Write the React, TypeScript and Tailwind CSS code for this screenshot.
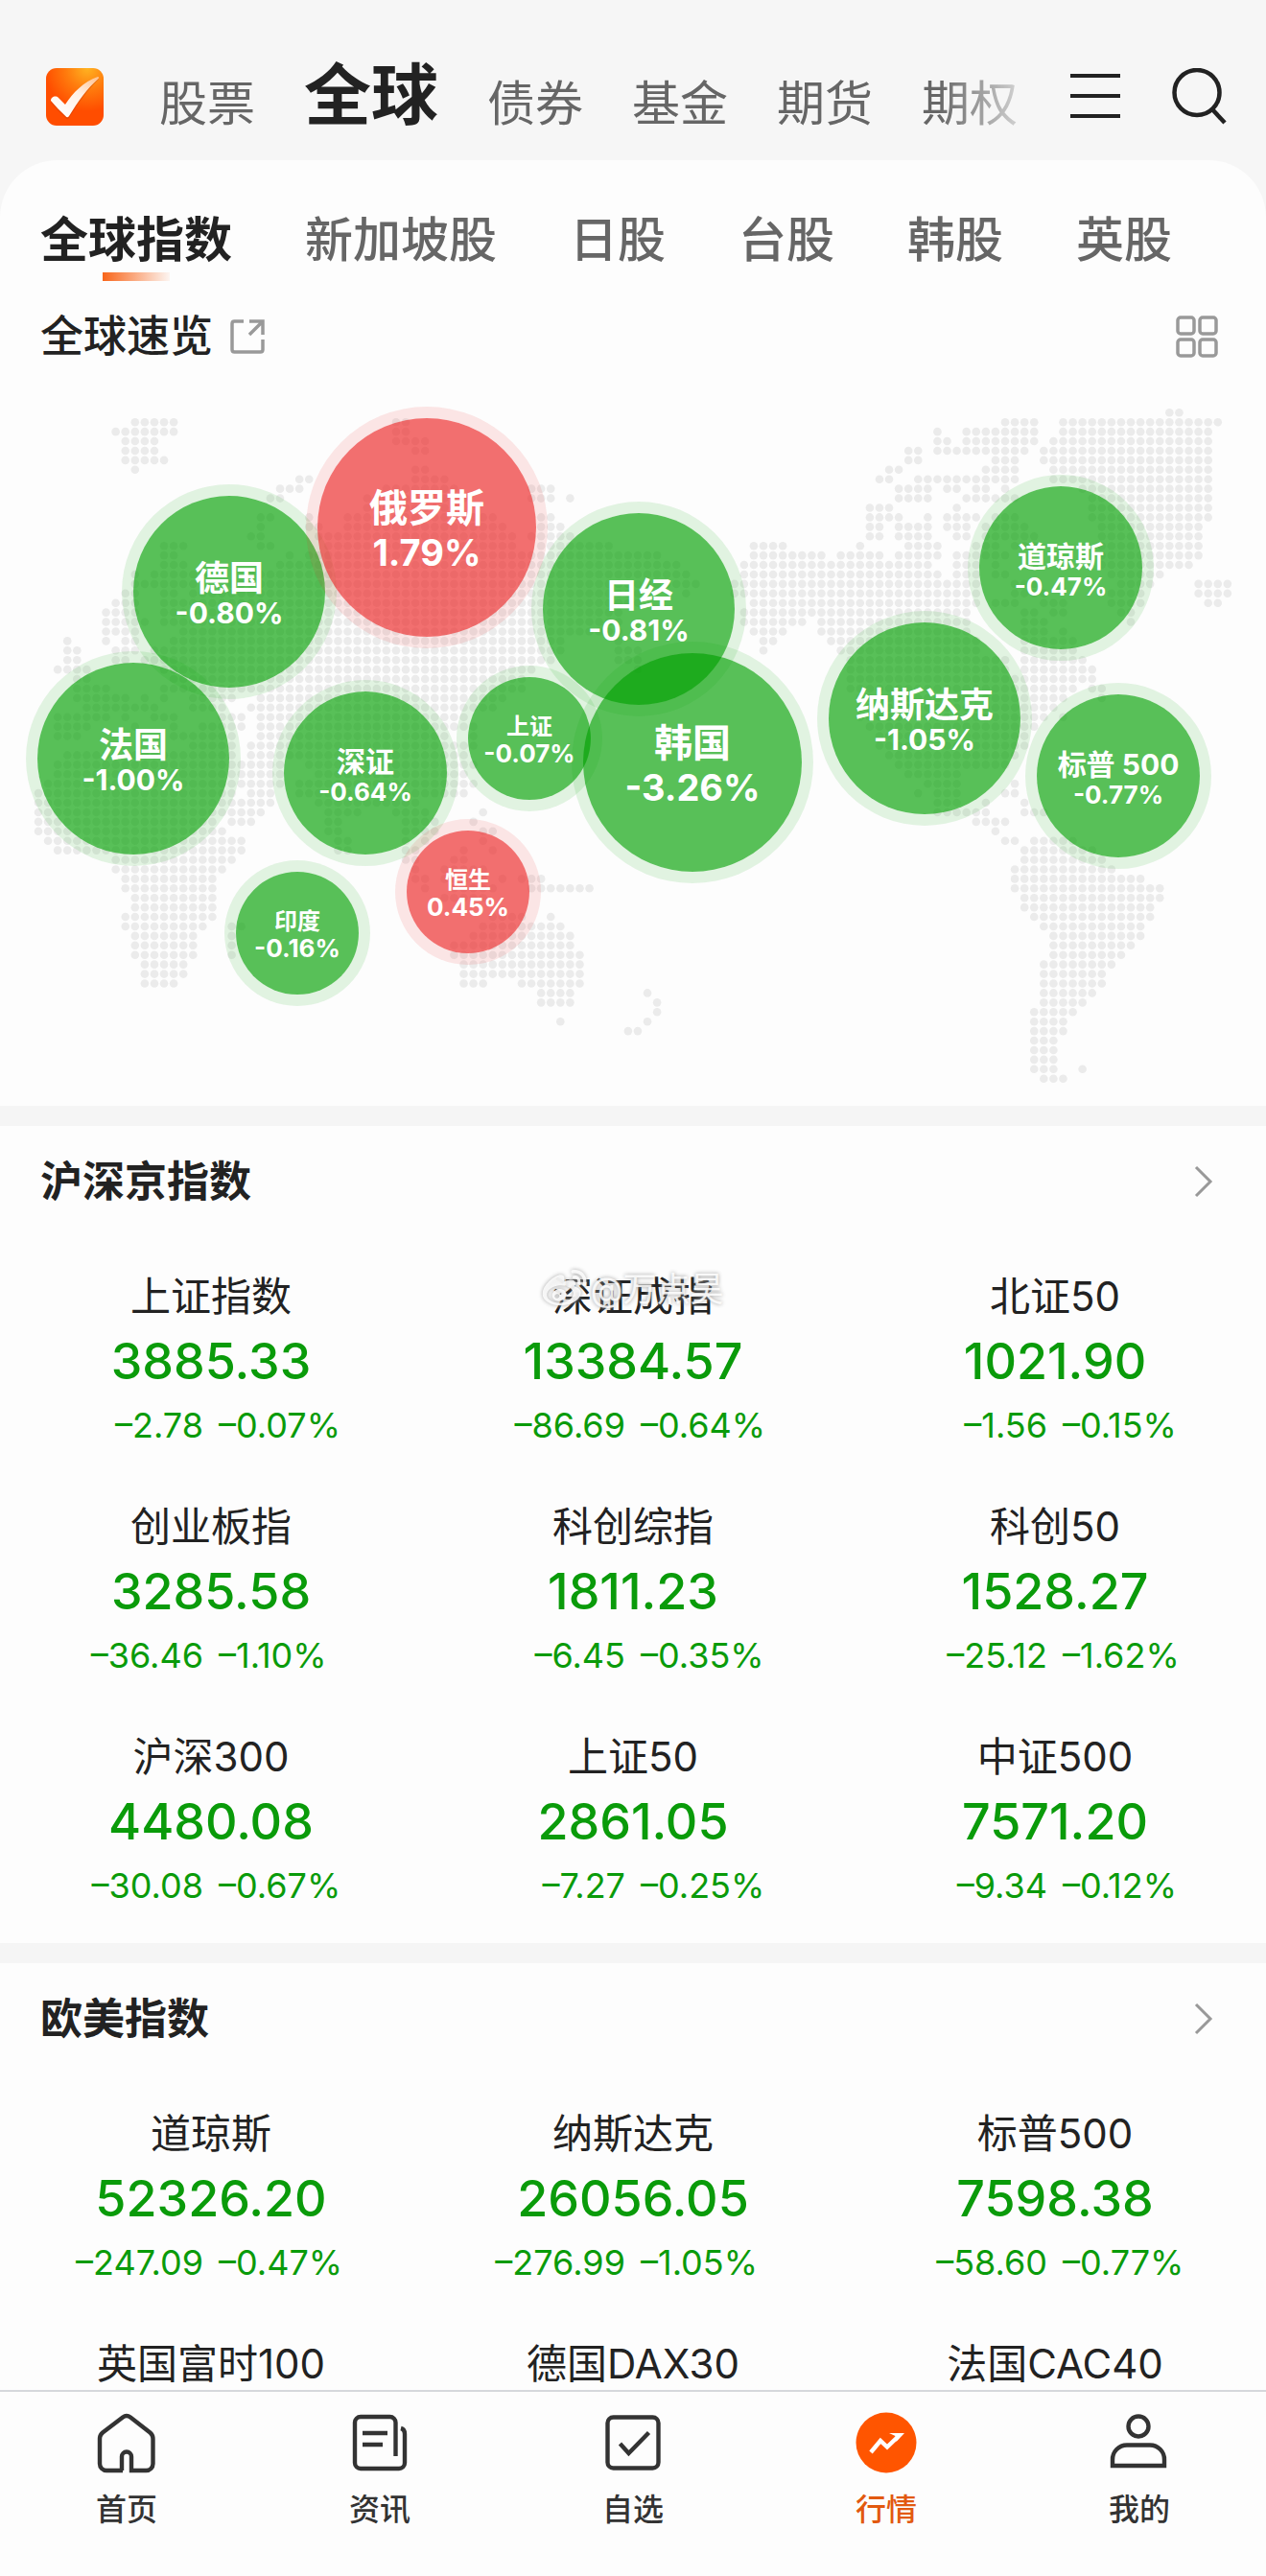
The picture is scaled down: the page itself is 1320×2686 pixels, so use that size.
import React from "react";
import { FaWeibo } from "react-icons/fa";

const CJK = "font-['Inter','Noto_Sans_CJK_SC',sans-serif]";

/* Land dots of the world map: one entry per row, inclusive column spans. */
const MAP_ROWS = [
  "117-118",
  "10-14 37-38 100-103 106-122",
  "8-14 37-38 93 96-103 106-121",
  "9-12 37-40 93-94 96-103 105-121",
  "9-12 39-40 90-91 93-102 104-121",
  "9-13 90-91 99-101 104-121",
  "10 39-40 88-89 98-101 105-121",
  "27-28 39-42 87-88 91-101 105-121",
  "25-27 36-43 51-53 89-92 94-95 97-98 100 108-121",
  "24-25 34-44 51-53 55 89-92 96-101 109-121",
  "34-43 86-88 95 109-121",
  "23-24 28 32-47 52-53 86-89 92 94-97 99-101 109-121",
  "23 28-29 32-48 52-54 86-87 89-92 94-96 98-102 110-120",
  "22-23 29-49 51-55 86-87 89-92 95-96 98-103 110-120",
  "13-15 23-24 30-49 52-59 74-77 85 90-93 97-99 101-103 110-120",
  "13-14 26 28-64 74-81 83-87 89-93 95-100 110-120",
  "13-15 25-66 73-92 95-97 99 110-119",
  "10 12-17 22-67 73-93 95-97 99-100 111-116",
  "10-16 20-68 72-97 101-103 112-115 120-123",
  "9-10 13-14 16-62 67 72-97 101-104 111-114 120-123",
  "8-10 13-62 74-97 99-101 104-106 111-114 121-122",
  "7-10 13-60 73-96 102-103 105-106 112-113",
  "7-11 13-60 73-79 81-96 102-104 113",
  "7-10 15-60 74-77 81-96 102-104 106",
  "3 7 9-10 14-54 60 75-76 82-97 102-107",
  "3-4 8-10 12-54 60-62 75 83-97 102-107",
  "3-4 8-9 11-53 60-62 84-100 102-108",
  "2-5 13-51 62 84-100 102-109",
  "4-5 14-50 84-109",
  "4-7 13-50 84-107 109-110",
  "4-9 11 13 16-20 23-48 85-106 110",
  "5-12 16-19 22-47 85-105",
  "2-7 9 12-14 19-21 23-44 85-104 106",
  "2-5 10 14 17-21 23-45 86-103",
  "2-4 14-20 23-42 45 87-102",
  "16-20 22-45 87-102",
  "3-20 22-44 88-101",
  "2-25 28-45 89-100",
  "2-25 29-44 90-95",
  "1-25 27-45 92-95 101",
  "0-20 22-24 27-44 91 93-95 100-101",
  "0-24 29-39 93-95 98 102",
  "0-23 30-33 37-40 46 93-98 102-104",
  "0-18 20-22 30-31 38-41 45 97-100",
  "0-19 30-31 38-41 46-47 99",
  "1-21 31-32 38 40 46 100-101 103-107",
  "2-21 31-32 38-39 44 47 102-109",
  "8-20 38-39 43-44 102-110",
  "8-19 39 42-46 101-111",
  "9-18 39-40 42-46 48 50-52 101-114",
  "9-18 40 43-47 51-57 101-116",
  "10-18 42-46 102-116",
  "10-18 102-115",
  "9-18 47-50 53 103-115",
  "9-17 20-21 46-54 104-114",
  "10-16 20 45-55 105-114",
  "10-16 20 43-55 105-113",
  "10-16 20 43-56 105-112",
  "11-15 44-56 104-111",
  "11-15 44-56 104-110",
  "11-14 44-46 50-56 104-110",
  "52-55 63 104-109",
  "52-55 64 104-108",
  "64 103-107",
  "54 63 103-106",
  "61-62 103-106",
  "103-105",
  "103-105",
  "103-105",
  "103-105 108",
  "104-106",
];

function WorldDots() {
  const dots: React.ReactNode[] = [];
  MAP_ROWS.forEach((row, r) => {
    row.split(" ").forEach((span) => {
      const [a, b] = span.split("-").map(Number);
      for (let c = a; c <= (b ?? a); c++) {
        dots.push(
          <circle key={`${r}-${c}`} cx={40 + c * 10.08} cy={30.3 + r * 9.92} r={4.3} />
        );
      }
    });
  });
  return (
    <svg viewBox="0 0 1320 753" className="block w-full" fill="#ebebeb" aria-hidden="true">
      {dots}
    </svg>
  );
}

type Size = "s" | "m" | "l" | "xl";
const SIZES: Record<Size, { box: string; name: string; pct: string }> = {
  s: { box: "size-32 pt-1", name: "text-2xl leading-7", pct: "text-[26px] leading-7" },
  m: { box: "size-[170px] pt-1", name: "text-3xl leading-9", pct: "text-[26px] leading-7" },
  l: { box: "size-[200px] pt-1", name: "text-4xl leading-10", pct: "text-3xl leading-8" },
  xl: { box: "size-[228px]", name: "text-[40px] leading-[52px]", pct: "text-[38px] leading-10" },
};

/* Bubble centres in map coordinates (1320 x 753). */
const BUBBLES: { name: string; pct: string; x: number; y: number; size: Size; up?: boolean }[] = [
  { name: "德国", pct: "-0.80%", x: 239, y: 217, size: "l" },
  { name: "俄罗斯", pct: "1.79%", x: 445, y: 150, size: "xl", up: true },
  { name: "日经", pct: "-0.81%", x: 666, y: 235, size: "l" },
  { name: "道琼斯", pct: "-0.47%", x: 1106, y: 192, size: "m" },
  { name: "法国", pct: "-1.00%", x: 139, y: 391, size: "l" },
  { name: "深证", pct: "-0.64%", x: 381, y: 406, size: "m" },
  { name: "上证", pct: "-0.07%", x: 552, y: 370, size: "s" },
  { name: "韩国", pct: "-3.26%", x: 722, y: 395, size: "xl" },
  { name: "纳斯达克", pct: "-1.05%", x: 964, y: 349, size: "l" },
  { name: "标普 500", pct: "-0.77%", x: 1166, y: 409, size: "m" },
  { name: "印度", pct: "-0.16%", x: 310, y: 573, size: "s" },
  { name: "恒生", pct: "0.45%", x: 488, y: 530, size: "s", up: true },
];

function BubbleMap() {
  return (
    <div className="relative">
      <WorldDots />
      {BUBBLES.map((b) => {
        const s = SIZES[b.size];
        const tone = b.up
          ? "bg-[rgba(236,35,35,0.65)] shadow-[0_0_0_12px_rgba(236,35,35,0.11)]"
          : "bg-[rgba(0,160,0,0.65)] shadow-[0_0_0_12px_rgba(0,160,0,0.11)]";
        return (
          <a
            key={b.name}
            href="#"
            className={`absolute flex -translate-1/2 flex-col items-center justify-center rounded-full font-bold whitespace-nowrap text-white ${s.box} ${tone}`}
            style={{ left: `${(b.x / 1320) * 100}%`, top: `${(b.y / 753) * 100}%` }}
          >
            <span className={s.name}>{b.name}</span>
            <span className={s.pct}>{b.pct}</span>
          </a>
        );
      })}
    </div>
  );
}

type Quote = { name: string; value: string; diff: string; pct: string; marked?: boolean };

const CHINA: Quote[] = [
  { name: "上证指数", value: "3885.33", diff: "–2.78", pct: "–0.07%" },
  { name: "深证成指", value: "13384.57", diff: "–86.69", pct: "–0.64%", marked: true },
  { name: "北证50", value: "1021.90", diff: "–1.56", pct: "–0.15%" },
  { name: "创业板指", value: "3285.58", diff: "–36.46", pct: "–1.10%" },
  { name: "科创综指", value: "1811.23", diff: "–6.45", pct: "–0.35%" },
  { name: "科创50", value: "1528.27", diff: "–25.12", pct: "–1.62%" },
  { name: "沪深300", value: "4480.08", diff: "–30.08", pct: "–0.67%" },
  { name: "上证50", value: "2861.05", diff: "–7.27", pct: "–0.25%" },
  { name: "中证500", value: "7571.20", diff: "–9.34", pct: "–0.12%" },
];

const WEST: Quote[] = [
  { name: "道琼斯", value: "52326.20", diff: "–247.09", pct: "–0.47%" },
  { name: "纳斯达克", value: "26056.05", diff: "–276.99", pct: "–1.05%" },
  { name: "标普500", value: "7598.38", diff: "–58.60", pct: "–0.77%" },
  { name: "英国富时100", value: "", diff: "", pct: "" },
  { name: "德国DAX30", value: "", diff: "", pct: "" },
  { name: "法国CAC40", value: "", diff: "", pct: "" },
];

function Watermark() {
  return (
    <span className="pointer-events-none absolute -top-2 left-1/2 flex -translate-x-1/2 items-center text-[35px] leading-[60px] whitespace-nowrap text-white/85 [text-shadow:0_0_4px_#999]">
      <FaWeibo className="mr-1 size-[46px] drop-shadow-[0_0_2px_#999]" aria-hidden="true" />
      @万点昊
    </span>
  );
}

function QuoteCell({ q }: { q: Quote }) {
  return (
    <div className="relative text-center">
      <h3 className="text-[42px] leading-[60px] text-[#222]">{q.name}</h3>
      {q.marked && <Watermark />}
      <p className="text-[52px] leading-[76px] font-medium text-[#0a9b0a]">{q.value}</p>
      <p className="grid grid-cols-2 gap-4 text-4xl leading-[56px] text-[#0a9b0a]">
        <span className="justify-self-end">{q.diff}</span>
        <span className="justify-self-start">{q.pct}</span>
      </p>
    </div>
  );
}

function IndexSection({ title, quotes }: { title: string; quotes: Quote[] }) {
  return (
    <section className="border-t-[21px] border-[#f5f5f5] pb-8">
      <a href="#" className="flex h-[116px] items-center justify-between pr-[52px] pl-[42px]">
        <h2 className="text-[44px] leading-[60px] font-bold text-[#222]">{title}</h2>
        <svg className="h-9 w-6" viewBox="0 0 24 36" fill="none" stroke="#999" strokeWidth="3" aria-hidden="true">
          <path d="M3 3l15 15L3 33" />
        </svg>
      </a>
      <div className="grid grid-cols-3 gap-y-12 pt-8">
        {quotes.map((q) => (
          <QuoteCell key={q.name} q={q} />
        ))}
      </div>
    </section>
  );
}

function Logo() {
  return (
    <svg viewBox="0 0 60 60" className="size-[60px] shrink-0" role="img" aria-label="首页">
      <defs>
        <radialGradient id="logoGlow" cx="0.72" cy="0" r="0.75">
          <stop offset="0" stopColor="#ffb321" />
          <stop offset="0.5" stopColor="#ff7b0d" />
          <stop offset="1" stopColor="#ff4d00" />
        </radialGradient>
        <linearGradient id="logoTick" x1="1" y1="0" x2="0.2" y2="1">
          <stop offset="0" stopColor="#ffc08a" />
          <stop offset="0.45" stopColor="#fff0e4" />
          <stop offset="1" stopColor="#fff" />
        </linearGradient>
      </defs>
      <rect width="60" height="60" rx="11" fill="url(#logoGlow)" />
      <path d="M5 35c0-4 5-6 8-3l7 7C28 27 39 15 54 9c1 0 1.500 1 .7 2C43 22 34 35 24 51c-1 1.500-2.500 1.500-3.500.3C15 46 10 41 5 35z" fill="#c33a00" opacity="0.35" transform="translate(0 1)" />
      <path d="M5 34c0-4 5-6 8-3l7 7C28 26 39 14 54 9c1 0 1.500 1 .7 2C43 21 34 34 24 50c-1 1.500-2.500 1.500-3.500.3C15 45 10 40 5 34z" fill="url(#logoTick)" />
    </svg>
  );
}

function Header() {
  return (
    <header className="flex items-end pt-12 pr-10 pb-9 pl-12">
      <Logo />
      <nav className="-mb-5 ml-[58px] flex min-w-0 flex-1 items-end gap-[51px] overflow-hidden text-[50px] leading-[86px] whitespace-nowrap text-[#666] [mask-image:linear-gradient(to_right,#000_calc(100%-90px),rgba(0,0,0,0.2))]">
        <a href="#">股票</a>
        <a href="#" aria-current="page" className="text-[70px] leading-[103px] font-bold text-[#222]">全球</a>
        <a href="#">债券</a>
        <a href="#">基金</a>
        <a href="#">期货</a>
        <a href="#">期权</a>
      </nav>
      <button type="button" aria-label="菜单" className="ml-11">
        <svg className="size-[60px]" viewBox="0 0 60 60" fill="none" stroke="#222" strokeWidth="4" aria-hidden="true">
          <path d="M4 8h52M4 29h52M4 50h52" />
        </svg>
      </button>
      <button type="button" aria-label="搜索" className="ml-12">
        <svg className="size-[60px]" viewBox="0 0 60 60" fill="none" stroke="#222" strokeWidth="4.500" aria-hidden="true">
          <circle cx="28" cy="25.500" r="23.500" />
          <path d="M44 43l13 14" />
        </svg>
      </button>
    </header>
  );
}

const NAV_ICON = "size-16";

function BottomNav() {
  const line = {
    className: NAV_ICON,
    viewBox: "0 0 64 64",
    fill: "none",
    stroke: "#333",
    strokeWidth: 4.4,
    "aria-hidden": true,
  } as const;
  const items = [
    {
      label: "首页",
      icon: (
        <svg {...line}>
          <path d="M28 61H11a7 7 0 0 1-7-7V28q0-4 3-6.500L28 5.500q4-3 8 0L56.500 21.500q3 2.500 3 6.500V54a7 7 0 0 1-7 7H37V46.500a5 5 0 0 0-10 0V61" />
        </svg>
      ),
    },
    {
      label: "资讯",
      icon: (
        <svg {...line}>
          <path d="M48.500 46V11a6 6 0 0 0-6-6H12a6 6 0 0 0-6 6v42a6 6 0 0 0 6 6h40a6 6 0 0 0 6-6V23q0-5-4-6M14 22h26M14 34h21" />
        </svg>
      ),
    },
    {
      label: "自选",
      icon: (
        <svg {...line}>
          <rect x="5.500" y="5.500" width="53" height="53" rx="6" />
          <path d="M18.500 33l9 10L48.500 21.500" />
        </svg>
      ),
    },
    {
      label: "行情",
      active: true,
      icon: (
        <svg className={NAV_ICON} viewBox="0 0 64 64" aria-hidden="true">
          <circle cx="32" cy="32" r="31.500" fill="#ff5500" />
          <path d="M16 42l10-12 7 6.500L44 26" fill="none" stroke="#fff" strokeWidth="4.400" />
          <path d="M35 22h16l-8.500 9-1-6z" fill="#fff" />
        </svg>
      ),
    },
    {
      label: "我的",
      icon: (
        <svg {...line}>
          <circle cx="31" cy="15" r="10.500" />
          <path d="M4 56V50a15 15 0 0 1 15-15.500H43A15 15 0 0 1 58 50V56z" />
        </svg>
      ),
    },
  ];
  return (
    <nav className="grid shrink-0 grid-cols-5 border-t-2 border-[#d6d8dc] bg-[#fdfdfd] pt-[21px] pb-[47px]">
      {items.map((it) => (
        <a
          key={it.label}
          href="#"
          aria-current={it.active ? "page" : undefined}
          className={`flex flex-col items-center gap-4 text-[32px] leading-[44px] font-medium ${it.active ? "text-[#e2590f]" : "text-[#333]"}`}
        >
          {it.icon}
          {it.label}
        </a>
      ))}
    </nav>
  );
}

export default function App() {
  return (
    <div className={`flex h-screen flex-col overflow-hidden bg-[#f6f6f6] ${CJK}`}>
      <Header />
      <main className="min-h-0 flex-1 overflow-hidden rounded-t-[60px] bg-[#fdfdfd]">
        <nav className="flex gap-[76px] overflow-hidden pt-[53px] pl-[42px] text-[50px] leading-[60px] font-medium whitespace-nowrap text-[#666]">
          <a href="#" aria-current="page" className="flex flex-col items-center font-bold text-[#222]">
            全球指数
            <span className="mt-1 h-[9px] w-[70px] bg-linear-to-r from-[#f8651a] to-[#f8651a]/5" />
          </a>
          <a href="#">新加坡股</a>
          <a href="#">日股</a>
          <a href="#">台股</a>
          <a href="#">韩股</a>
          <a href="#">英股</a>
        </nav>
        <div className="flex h-[107px] items-center justify-between pt-[9px] pr-[50px] pl-[42px]">
          <h2 className="flex items-center gap-[18px] text-[45px] leading-[60px] font-medium text-[#222]">
            全球速览
            <svg className="size-9" viewBox="0 0 36 36" fill="none" stroke="#999" strokeWidth="3.500" aria-hidden="true">
              <path d="M14 2H4.500Q2 2 2 4.500v27Q2 34 4.500 34h27q2.500 0 2.500-2.500V21M20 2h14v14M33 3L20 16" />
            </svg>
          </h2>
          <button type="button" aria-label="切换布局">
            <svg className="size-11" viewBox="0 0 44 44" fill="none" stroke="#999" strokeWidth="3.500" aria-hidden="true">
              <rect x="2" y="2" width="17" height="17" rx="3" />
              <rect x="25" y="2" width="17" height="17" rx="3" />
              <rect x="2" y="25" width="17" height="17" rx="3" />
              <rect x="25" y="25" width="17" height="17" rx="3" />
            </svg>
          </button>
        </div>
        <BubbleMap />
        <IndexSection title="沪深京指数" quotes={CHINA} />
        <IndexSection title="欧美指数" quotes={WEST} />
      </main>
      <BottomNav />
    </div>
  );
}
